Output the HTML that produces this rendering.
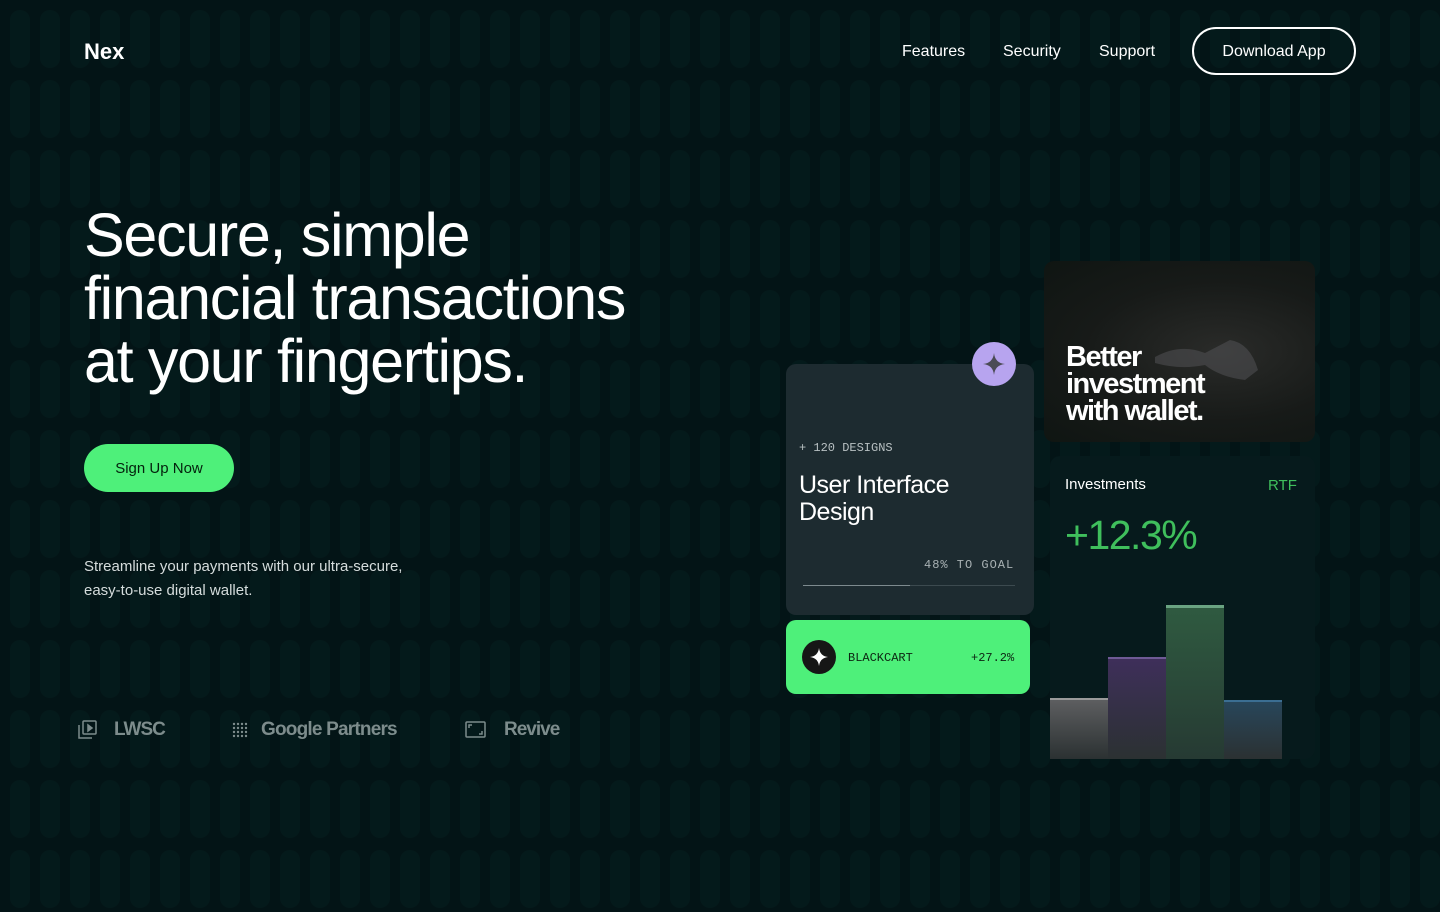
<!DOCTYPE html>
<html><head><meta charset="utf-8"><style>
*{margin:0;padding:0;box-sizing:border-box}
body{width:1440px;height:912px;overflow:hidden;background:#031416;font-family:"Liberation Sans",sans-serif;color:#fff;position:relative}
.bg{position:absolute;left:0;top:0}
.abs{position:absolute}
.nav a{position:absolute;top:43px;font-size:16px;color:#fff}
.mono{font-family:"Liberation Mono",monospace}
</style></head><body>
<svg class="bg" width="1440" height="912"><defs><pattern id="p" width="30" height="70" patternUnits="userSpaceOnUse"><rect x="10" y="10" width="20" height="58" rx="10" fill="#041a1b"/></pattern></defs><rect width="1440" height="912" fill="url(#p)"/></svg>

<div class="abs" style="left:84px;top:39px;font-size:22px;font-weight:700">Nex</div>
<div class="nav"><a style="left:902px">Features</a><a style="left:1003px">Security</a><a style="left:1099px">Support</a></div>
<div class="abs" style="left:1192px;top:27px;width:164px;height:48px;border:2px solid #fff;border-radius:24px;font-size:16px;text-align:center;line-height:45px">Download App</div>

<div class="abs" style="left:84px;top:204px;font-size:61px;line-height:63px;letter-spacing:-1.3px">Secure, simple<br>financial transactions<br>at your fingertips.</div>
<div class="abs" style="left:84px;top:444px;width:150px;height:48px;border-radius:24px;background:#4ef07a;color:#04210d;font-size:15px;text-align:center;line-height:49px">Sign Up Now</div>
<div class="abs" style="left:84px;top:555px;font-size:15px;line-height:24px;color:#d5dcdc">Streamline your payments with our ultra-secure,<br>easy-to-use digital wallet.</div>

<div class="abs" style="left:78px;top:719px;color:#7d8c8c;font-size:19px;font-weight:700;letter-spacing:-1px">
<svg class="abs" style="left:0;top:1px" width="20" height="20" fill="none" stroke="#7d8c8c" stroke-width="1.5"><rect x="5" y="1" width="13" height="13" rx="1"/><path d="M1 5v13h13"/><path d="M10 5l4 3-4 3z" fill="#7d8c8c"/></svg>
<span class="abs" style="left:36px;top:0">LWSC</span>
<svg class="abs" style="left:154px;top:3px" width="18" height="18" fill="#7d8c8c"><g><circle cx="2" cy="2" r="1.2"/><circle cx="6" cy="2" r="1.2"/><circle cx="10" cy="2" r="1.2"/><circle cx="14" cy="2" r="1.2"/><circle cx="2" cy="6" r="1.2"/><circle cx="6" cy="6" r="1.2"/><circle cx="10" cy="6" r="1.2"/><circle cx="14" cy="6" r="1.2"/><circle cx="2" cy="10" r="1.2"/><circle cx="6" cy="10" r="1.2"/><circle cx="10" cy="10" r="1.2"/><circle cx="14" cy="10" r="1.2"/><circle cx="2" cy="14" r="1.2"/><circle cx="6" cy="14" r="1.2"/><circle cx="10" cy="14" r="1.2"/><circle cx="14" cy="14" r="1.2"/></g></svg>
<span class="abs" style="left:183px;top:0;white-space:nowrap;letter-spacing:-0.8px">Google Partners</span>
<svg class="abs" style="left:387px;top:2px" width="22" height="18" fill="none" stroke="#7d8c8c" stroke-width="1.5"><rect x="1" y="1" width="19" height="15" rx="1"/><path d="M4 7V4h3M17 10v3h-3"/></svg>
<span class="abs" style="left:426px;top:0">Revive</span>
</div>

<div class="abs" style="left:786px;top:364px;width:248px;height:251px;background:#1d2b30;border-radius:10px"></div>
<div class="abs" style="left:972px;top:342px;width:44px;height:44px;border-radius:50%;background:#b7a4ef"><svg width="44" height="44"><path d="M22 11Q23 21 33 22Q23 23 22 33Q21 23 11 22Q21 21 22 11Z" fill="#4b4b55"/></svg></div>
<div class="abs mono" style="left:799px;top:441px;font-size:12px;color:#b8c0c2">+ 120 DESIGNS</div>
<div class="abs" style="left:799px;top:472px;font-size:25px;line-height:27px;letter-spacing:-0.5px">User Interface<br>Design</div>
<div class="abs mono" style="left:924px;top:558px;font-size:12px;color:#a9b2b4;letter-spacing:1px">48% TO GOAL</div>
<div class="abs" style="left:803px;top:585px;width:212px;height:1px;background:#3c4a4f"></div>
<div class="abs" style="left:803px;top:585px;width:107px;height:1px;background:#7d8a8e"></div>

<div class="abs" style="left:786px;top:620px;width:244px;height:74px;background:#4ef07a;border-radius:10px"></div>
<div class="abs" style="left:802px;top:640px;width:34px;height:34px;border-radius:50%;background:#161616"><svg width="34" height="34"><path d="M17 8Q18 16 26 17Q18 18 17 26Q16 18 8 17Q16 16 17 8Z" fill="#fff"/></svg></div>
<div class="abs mono" style="left:848px;top:651px;font-size:12px;color:#0d2512">BLACKCART</div>
<div class="abs mono" style="left:971px;top:651px;font-size:12px;color:#0d2512">+27.2%</div>

<div class="abs" style="left:1044px;top:261px;width:271px;height:181px;border-radius:10px;background:radial-gradient(ellipse at 65% 50%,#2a2b29 0%,#171a18 55%,#0f1512 100%)"></div>
<svg class="abs" style="left:1150px;top:335px" width="110" height="50"><path d="M5 22Q30 8 55 18L80 5Q100 8 108 35L95 45Q70 42 55 30Q30 35 5 28Z" fill="#55565a" opacity=".5"/></svg>
<div class="abs" style="left:1066px;top:344px;font-size:29px;line-height:27px;font-weight:700;letter-spacing:-1.5px">Better<br>investment<br>with wallet.</div>

<div class="abs" style="left:1050px;top:456px;width:265px;height:303px;background:#061a1c;border-radius:10px"></div>
<div class="abs" style="left:1065px;top:476px;font-size:15px">Investments</div>
<div class="abs" style="left:1268px;top:477px;font-size:15px;color:#3fbf5c">RTF</div>
<div class="abs" style="left:1065px;top:512px;font-size:41px;color:#3fbf5c;letter-spacing:-1.5px">+12.3%</div>
<div class="abs" style="left:1050px;top:698px;width:58px;height:61px;background:linear-gradient(#5d5e60,#2b3132);border-top:2px solid #9a9a9a"></div>
<div class="abs" style="left:1108px;top:657px;width:58px;height:102px;background:linear-gradient(#3e2f5a,#2b3132);border-top:2px solid #6e5a95"></div>
<div class="abs" style="left:1166px;top:605px;width:58px;height:154px;background:linear-gradient(#2f5a40,#263a33);border-top:3px solid #6aa482"></div>
<div class="abs" style="left:1224px;top:700px;width:58px;height:59px;background:linear-gradient(#28465a,#2b3132);border-top:2px solid #3b6e92"></div>
</body></html>
